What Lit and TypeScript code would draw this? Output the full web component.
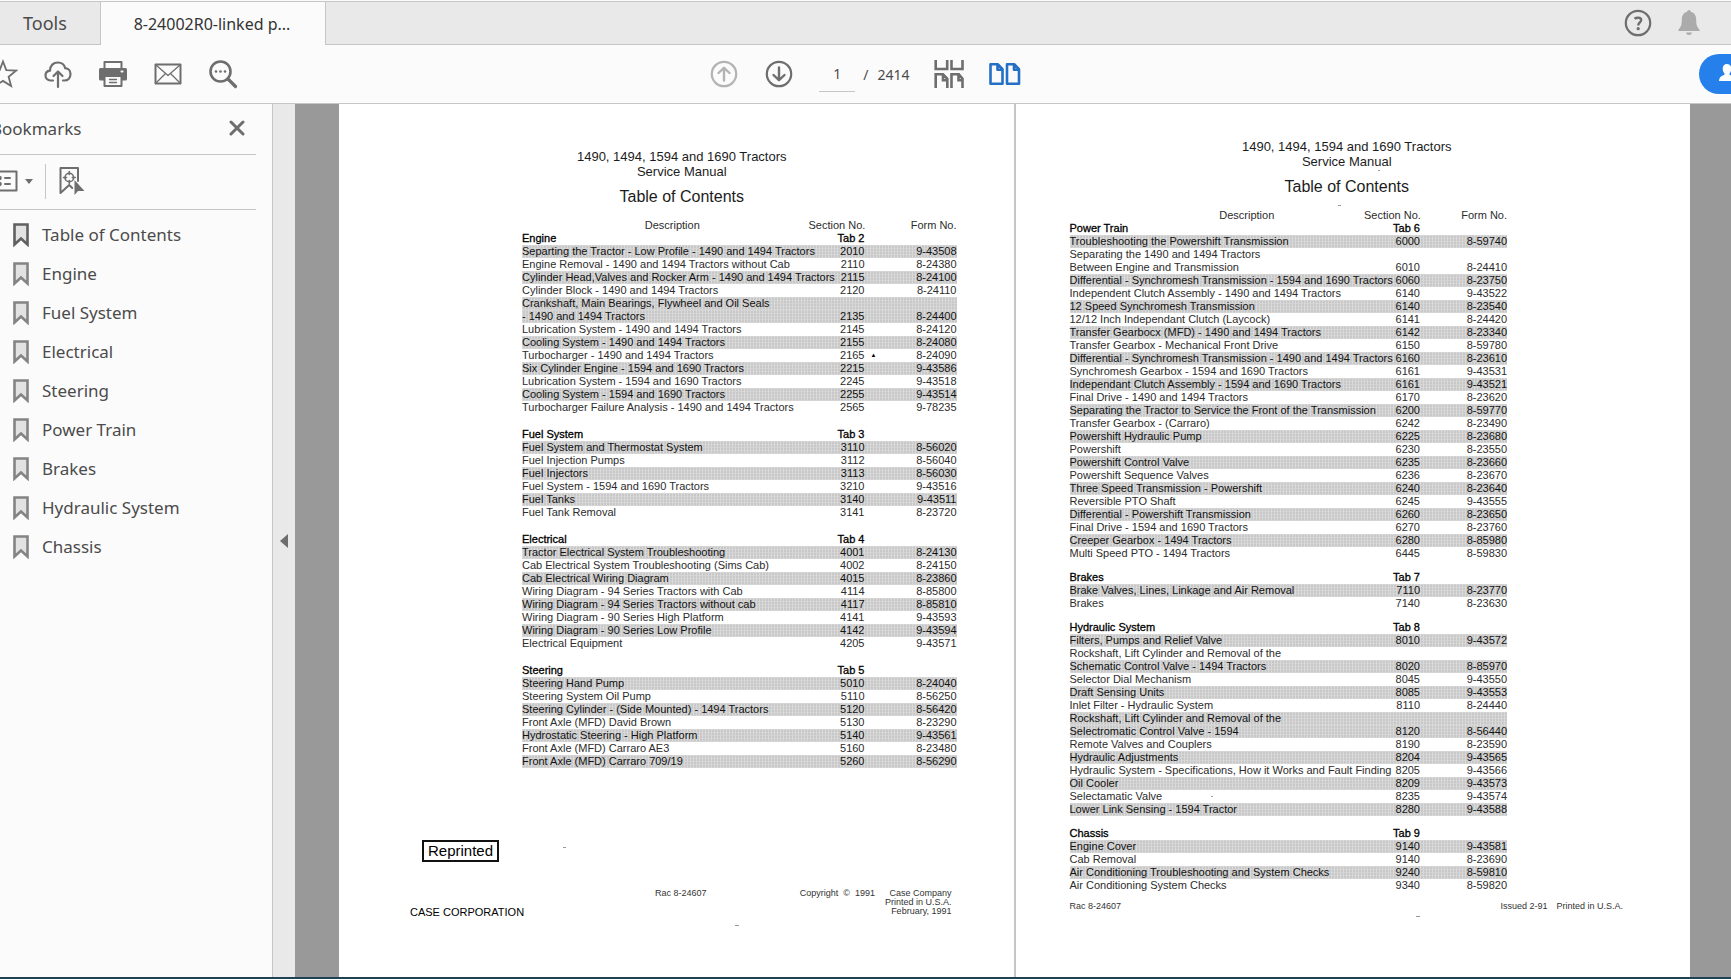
import { LitElement, html, css, svg, nothing } from "lit";
import { customElement, property } from "lit/decorators.js";

type Row = { text: string; section?: string; form?: string; band?: boolean; mark?: boolean };
type Group = { title: string; tab: string; rows: Row[] };
type Speck = { x: number; y: number; w: number };

/** Each entry is "description|section|form"; a leading * marks a shaded row. */
const rows = (source: string): Row[] =>
  source
    .trim()
    .split("\n")
    .map((line) => {
      const raw = line.trim();
      const band = raw.startsWith("*");
      const [text, section, form] = (band ? raw.slice(1) : raw).split("|");
      return { text, section, form, band, mark: section === "2165" };
    });

const LEFT: Group[] = [
  {
    title: "Engine",
    tab: "Tab 2",
    rows: rows(`
      *Separting the Tractor - Low Profile - 1490 and 1494 Tractors|2010|9-43508
      Engine Removal - 1490 and 1494 Tractors without Cab|2110|8-24380
      *Cylinder Head,Valves and Rocker Arm - 1490 and 1494 Tractors|2115|8-24100
      Cylinder Block - 1490 and 1494 Tractors|2120|8-24110
      *Crankshaft, Main Bearings, Flywheel and Oil Seals
      *- 1490 and 1494 Tractors|2135|8-24400
      Lubrication System - 1490 and 1494 Tractors|2145|8-24120
      *Cooling System - 1490 and 1494 Tractors|2155|8-24080
      Turbocharger - 1490 and 1494 Tractors|2165|8-24090
      *Six Cylinder Engine - 1594 and 1690 Tractors|2215|9-43586
      Lubrication System - 1594 and 1690 Tractors|2245|9-43518
      *Cooling System - 1594 and 1690 Tractors|2255|9-43514
      Turbocharger Failure Analysis - 1490 and 1494 Tractors|2565|9-78235`),
  },
  {
    title: "Fuel System",
    tab: "Tab 3",
    rows: rows(`
      *Fuel System and Thermostat System|3110|8-56020
      Fuel Injection Pumps|3112|8-56040
      *Fuel Injectors|3113|8-56030
      Fuel System - 1594 and 1690 Tractors|3210|9-43516
      *Fuel Tanks|3140|9-43511
      Fuel Tank Removal|3141|8-23720`),
  },
  {
    title: "Electrical",
    tab: "Tab 4",
    rows: rows(`
      *Tractor Electrical System Troubleshooting|4001|8-24130
      Cab Electrical System Troubleshooting (Sims Cab)|4002|8-24150
      *Cab Electrical Wiring Diagram|4015|8-23860
      Wiring Diagram - 94 Series Tractors with Cab|4114|8-85800
      *Wiring Diagram - 94 Series Tractors without cab|4117|8-85810
      Wiring Diagram - 90 Series High Platform|4141|9-43593
      *Wiring Diagram - 90 Series Low Profile|4142|9-43594
      Electrical Equipment|4205|9-43571`),
  },
  {
    title: "Steering",
    tab: "Tab 5",
    rows: rows(`
      *Steering Hand Pump|5010|8-24040
      Steering System Oil Pump|5110|8-56250
      *Steering Cylinder - (Side Mounted) - 1494 Tractors|5120|8-56420
      Front Axle (MFD) David Brown|5130|8-23290
      *Hydrostatic Steering - High Platform|5140|9-43561
      Front Axle (MFD) Carraro AE3|5160|8-23480
      *Front Axle (MFD) Carraro 709/19|5260|8-56290`),
  },
];

const RIGHT: Group[] = [
  {
    title: "Power Train",
    tab: "Tab 6",
    rows: rows(`
      *Troubleshooting the Powershift Transmission|6000|8-59740
      Separating the 1490 and 1494 Tractors
      Between Engine and Transmission|6010|8-24410
      *Differential - Synchromesh Transmission - 1594 and 1690 Tractors|6060|8-23750
      Independent Clutch Assembly - 1490 and 1494 Tractors|6140|9-43522
      *12 Speed Synchromesh Transmission|6140|8-23540
      12/12 Inch Independant Clutch (Laycock)|6141|8-24420
      *Transfer Gearbocx (MFD) - 1490 and 1494 Tractors|6142|8-23340
      Transfer Gearbox - Mechanical Front Drive|6150|8-59780
      *Differential - Synchromesh Transmission - 1490 and 1494 Tractors|6160|8-23610
      Synchromesh Gearbox - 1594 and 1690 Tractors|6161|9-43531
      *Independant Clutch Assembly - 1594 and 1690 Tractors|6161|9-43521
      Final Drive - 1490 and 1494 Tractors|6170|8-23620
      *Separating the Tractor to Service the Front of the Transmission|6200|8-59770
      Transfer Gearbox - (Carraro)|6242|8-23490
      *Powershift Hydraulic Pump|6225|8-23680
      Powershift|6230|8-23550
      *Powershift Control Valve|6235|8-23660
      Powershift Sequence Valves|6236|8-23670
      *Three Speed Transmission - Powershift|6240|8-23640
      Reversible PTO Shaft|6245|9-43555
      *Differential - Powershift Transmission|6260|8-23650
      Final Drive - 1594 and 1690 Tractors|6270|8-23760
      *Creeper Gearbox - 1494 Tractors|6280|8-85980
      Multi Speed PTO - 1494 Tractors|6445|8-59830`),
  },
  {
    title: "Brakes",
    tab: "Tab 7",
    rows: rows(`
      *Brake Valves, Lines, Linkage and Air Removal|7110|8-23770
      Brakes|7140|8-23630`),
  },
  {
    title: "Hydraulic System",
    tab: "Tab 8",
    rows: rows(`
      *Filters, Pumps and Relief Valve|8010|9-43572
      Rockshaft, Lift Cylinder and Removal of the
      *Schematic Control Valve - 1494 Tractors|8020|8-85970
      Selector Dial Mechanism|8045|9-43550
      *Draft Sensing Units|8085|9-43553
      Inlet Filter - Hydraulic System|8110|8-24440
      *Rockshaft, Lift Cylinder and Removal of the
      *Selectromatic Control Valve - 1594|8120|8-56440
      Remote Valves and Couplers|8190|8-23590
      *Hydraulic Adjustments|8204|9-43565
      Hydraulic System - Specifications, How it Works and Fault Finding|8205|9-43566
      *Oil Cooler|8209|9-43573
      Selectamatic Valve|8235|9-43574
      *Lower Link Sensing - 1594 Tractor|8280|9-43588`),
  },
  {
    title: "Chassis",
    tab: "Tab 9",
    rows: rows(`
      *Engine Cover|9140|9-43581
      Cab Removal|9140|8-23690
      *Air Conditioning Troubleshooting and System Checks|9240|8-59810
      Air Conditioning System Checks|9340|8-59820`),
  },
];

const icon = (w: number, h: number, body: unknown) =>
  html`<svg width=${w} height=${h} viewBox="0 0 ${w} ${h}" fill="none" stroke="currentColor" stroke-width="2" stroke-linecap="round" stroke-linejoin="round" aria-hidden="true">${body}</svg>`;

const icons = {
  star: icon(30, 30, svg`<path stroke-width="1.8" stroke-linejoin="miter" d="M15 2.5l3.3 8.6 10 .4-7.700 6.300 2.500 9.200-8.100-5.100-8.100 5.100 2.500-9.200-7.700-6.300 10-.4z"/>`),
  cloud: icon(30, 30, svg`<path stroke-width="2.2" d="M10 21.500H7.500C4.500 21.500 2.500 19.300 2.500 16.600c0-2.600 1.900-4.600 4.500-4.900C7 6.500 10.500 3.500 14.800 3.500c3.700 0 6.700 2.300 7.400 5.700 3.200.2 5.300 2.700 5.300 5.900 0 3.600-2.500 6.400-6 6.400H20"/><path stroke-width="2.200" d="M15 28V13M10.500 17l4.500-4.500 4.500 4.500"/>`),
  printer: icon(28, 28, svg`<path d="M5.500 9V2h17v7"/><path d="M1.500 9.500h25v9.500h-25z" fill="currentColor" stroke-width="3"/><path d="M5.500 16h17v10h-17z" fill="#fbfbfb"/><path d="M10.500 19.500h7M10.500 22.500h7" stroke-width="1.300"/><path d="M22.500 11.500h1" stroke="#fbfbfb"/>`),
  mail: icon(28, 22, svg`<path d="M1.500 1.500h25v19h-25z"/><path stroke-width="1.300" d="M2 2l12 10.500L26 2M2 20l9.500-9.500M26 20l-9.500-9.500"/>`),
  search: icon(30, 30, svg`<circle cx="12.500" cy="12.500" r="10" stroke-width="2.600"/><path d="M20 20l7.500 7.500" stroke-width="3.200"/><g fill="currentColor" stroke="none"><circle cx="8" cy="12.500" r="1.300"/><circle cx="12.500" cy="12.500" r="1.300"/><circle cx="17" cy="12.500" r="1.300"/></g>`),
  up: icon(28, 28, svg`<circle cx="14" cy="14" r="12.200" stroke-width="2.200"/><path stroke-width="2.400" d="M14 20.500V8.500M8.500 13L14 7.800 19.500 13"/>`),
  down: icon(28, 28, svg`<circle cx="14" cy="14" r="12.200" stroke-width="2.200"/><path stroke-width="2.400" d="M14 7.500v12M8.500 15l5.500 5.200L19.500 15"/>`),
  grid: icon(30, 28, svg`<g stroke-width="2.600" stroke-linecap="butt" stroke-linejoin="miter"><path d="M1.700 0v9h11.500V0M17.500 0v9h11V0"/><path d="M1.700 28V14.200h7.300l4.300 4.600V28M9 14.200v6h4.300M17.500 28V14.200h7.300l3.700 4.600V28M24.500 14.200v6h4"/></g>`),
  pages: icon(32, 24, svg`<path stroke-width="2.600" d="M1.500 2.200h7.200l4.800 5v14.500h-12zM8.500 2.500v5.200h5M18 2.200h7.200l4.800 5v14.500H18zM25 2.500v5.200h5"/>`),
  help: icon(28, 28, svg`<circle cx="14" cy="14" r="12.200" stroke-width="2.200"/><path stroke-width="2.400" stroke-linecap="butt" d="M10.500 9.700C11.800 8.700 17.200 7.800 17.200 11c0 2.300-3 2.500-3 5.500"/><circle cx="14.200" cy="19.700" r="1.600" fill="currentColor" stroke="none"/>`),
  bell: icon(22, 26, svg`<g fill="currentColor" stroke="none"><path d="M11 0c1 0 1.800.7 1.800 1.800 3.500.9 5.400 4 5.400 7.700 0 6.500 1.300 7.700 3.300 10v1.500H.5v-1.500c2-2.300 3.300-3.500 3.300-10 0-3.700 1.900-6.800 5.400-7.700C9.200.7 10 0 11 0z"/><path d="M8 22.500h6c-.5 1.800-1.500 2.500-3 2.500s-2.500-.7-3-2.500z"/></g>`),
  share: icon(30, 20, svg`<g fill="currentColor" stroke="none"><path d="M8 0c2.700 0 4.300 2 4.300 4.800 0 2-.8 3.600-1.800 4.600v1.400c2 .7 3.500 1.600 4.300 3V17H0c0-3.500 2-5.200 5.500-6.200V9.400C4.500 8.400 3.700 6.800 3.700 4.800 3.700 2 5.300 0 8 0z"/><circle cx="18" cy="14" r="6"/></g>`),
  close: icon(16, 16, svg`<path stroke-width="3" d="M2 2l12 12M14 2L2 14"/>`),
  options: icon(30, 22, svg`<path d="M1.500 1.500h27v19h-27z"/><path stroke-width="2" d="M17 8h5M17 14h5"/><g fill="currentColor" stroke="none"><circle cx="11.500" cy="8" r="2.300"/><circle cx="11.500" cy="14" r="2.300"/></g>`),
  caret: icon(8, 5, svg`<path d="M0 0h8L4 5z" fill="currentColor" stroke="none"/>`),
  find: icon(26, 30, svg`<path d="M1.500 2h17.500v13M1.500 2v25l8.700-8 3 3"/><circle cx="10.300" cy="11.500" r="4.300" stroke-width="1.600"/><path stroke-width="1.600" d="M10.300 5.500v3M10.300 14.500v3M4.500 11.500h3M13.300 11.500h3"/><path d="M15.500 14v15l3.500-4h6.500z" fill="currentColor" stroke="none"/>`),
  bookmark: icon(16, 24, svg`<path stroke-width="2.600" stroke-linejoin="miter" fill="#e2e2e2" d="M1.500 1.500h13v20l-6.500-6-6.500 6z"/>`),
  collapse: icon(8, 14, svg`<path d="M8 0v14L0 7z" fill="currentColor" stroke="none"/>`),
};

@customElement("contents-table")
export class ContentsTable extends LitElement {
  @property({ attribute: false }) groups: Group[] = [];

  static styles = css`
    :host {
      display: block;
      font-family: "Liberation Sans", Arial, sans-serif;
      font-size: 11px;
      line-height: 13px;
      color: #2c2c2c;
    }
    .table {
      width: 100%;
      table-layout: fixed;
      border-collapse: collapse;
    }
    .lead { width: 26px; }
    .section { width: 30px; }
    .form { width: var(--form-width, 92px); }
    th, td {
      padding: 0;
      height: 13px;
      font-weight: 400;
      text-align: left;
      white-space: nowrap;
    }
    .description {
      text-align: center;
      padding-left: var(--description-shift, 0);
    }
    .number { text-align: right; }
    .title { color: #000; -webkit-text-stroke: 0.3px #000; }
    .band {
      color: #111;
      background-color: #c8c8c8;
      background-image:
        repeating-linear-gradient(90deg, #d9d9d9 0 1px, transparent 1px 3px),
        repeating-linear-gradient(0deg, #d3d3d3 0 1px, transparent 1px 3px);
    }
    .group + .group::before {
      content: "";
      display: table-row;
      height: var(--group-gap, 14px);
    }
    .marked { position: relative; }
    .mark {
      position: absolute;
      left: 100%;
      margin-left: 6px;
      font-size: 6px;
      color: #000;
    }
  `;

  render() {
    return html`
      <table class="table">
        <colgroup><col /><col class="lead" /><col class="section" /><col class="form" /></colgroup>
        <thead>
          <tr>
            <th class="description" scope="col">Description</th>
            <th class="number" scope="col" colspan="2">Section No.</th>
            <th class="number" scope="col">Form No.</th>
          </tr>
        </thead>
        ${this.groups.map(
          (group) => html`
            <tbody class="group">
              <tr class="title">
                <th scope="rowgroup">${group.title}</th>
                <th class="number" colspan="2">${group.tab}</th>
                <td></td>
              </tr>
              ${group.rows.map(
                (row) => html`
                  <tr class=${row.band ? "band" : "plain"}>
                    <td colspan="2">${row.text}</td>
                    <td class="number marked">${row.section}${row.mark ? html`<span class="mark">▲</span>` : nothing}</td>
                    <td class="number">${row.form}</td>
                  </tr>
                `,
              )}
            </tbody>
          `,
        )}
      </table>
    `;
  }
}

@customElement("manual-page")
export class ManualPage extends LitElement {
  @property({ attribute: false }) groups: Group[] = [];
  @property({ attribute: false }) specks: Speck[] = [];

  static styles = css`
    :host {
      display: block;
      position: relative;
      flex: 1;
      min-width: 0;
      background: #fff;
      color: #1c1c1c;
      font-family: "Liberation Sans", Arial, sans-serif;
    }
    .heading { text-align: center; padding: var(--heading-padding); }
    .model { margin: 0; font-size: 13px; line-height: 15px; font-weight: 400; }
    .contents { margin: 8px 0 12px; font-size: 16px; line-height: 20px; font-weight: 400; }
    .table { padding: var(--table-padding); }
    .speck { position: absolute; height: 1px; background: #999; }
  `;

  render() {
    return html`
      <header class="heading">
        <p class="model">1490, 1494, 1594 and 1690 Tractors</p>
        <p class="model">Service Manual</p>
        <h2 class="contents">Table of Contents</h2>
      </header>
      <div class="table"><contents-table .groups=${this.groups}></contents-table></div>
      <slot></slot>
      ${this.specks.map((s) => html`<i class="speck" style="left:${s.x}px;top:${s.y}px;width:${s.w}px"></i>`)}
    `;
  }
}

@customElement("app-root")
export class AppRoot extends LitElement {
  static styles = css`
    :host {
      display: flex;
      flex-direction: column;
      box-sizing: border-box;
      height: 100vh;
      overflow: hidden;
      border-bottom: 2px solid #1f4156;
      background: #fbfbfb;
      color: #4b4b4b;
      font-family: "Noto Sans", "Open Sans", sans-serif;
    }
    button {
      display: inline-flex;
      align-items: center;
      justify-content: center;
      padding: 0;
      border: 0;
      background: none;
      color: #6e6e6e;
      font: inherit;
    }
    a { color: inherit; text-decoration: none; }
    svg { display: block; flex: none; }

    .tabs {
      display: flex;
      height: 43px;
      margin-top: 1px;
      border-top: 1px solid #c6c6c6;
      background: #e9e9e9;
    }
    .tab {
      box-sizing: border-box;
      border-bottom: 1px solid #c6c6c6;
      font-size: 16px;
      color: #333;
    }
    .tools { width: 100px; padding-right: 10px; font-size: 18px; color: #4b4b4b; }
    .current {
      width: 226px;
      padding-right: 2px;
      border-left: 1px solid #c6c6c6;
      border-right: 1px solid #c6c6c6;
      border-bottom: 0;
      background: #fbfbfb;
    }
    .tray {
      display: flex;
      flex: 1;
      align-items: center;
      justify-content: flex-end;
      gap: 26px;
      padding-right: 31px;
      border-bottom: 1px solid #c6c6c6;
    }
    .bell { color: #ababab; }

    .toolbar {
      display: grid;
      grid-template-columns: 1fr auto 1fr;
      align-items: center;
      height: 58px;
      border-bottom: 1px solid #c6c6c6;
    }
    .files { display: flex; align-items: center; gap: 26px; margin-left: -12px; }
    .files button { width: 29px; }
    .pager { display: flex; align-items: center; font-size: 15px; }
    .up { color: #b3b3b3; margin-right: 27px; }
    .number {
      box-sizing: border-box;
      width: 36px;
      height: 36px;
      margin-left: 26px;
      padding: 0;
      border: 0;
      border-bottom: 1px solid #c6c6c6;
      background: none;
      color: #4b4b4b;
      font: inherit;
      font-size: 14px;
      text-align: center;
    }
    .total { display: flex; gap: 9px; margin: 0 24px 0 8px; font-size: 14px; }
    .layout { margin-right: 25px; }
    .pages { color: #2470c4; }
    .share {
      justify-self: end;
      box-sizing: border-box;
      width: 88px;
      height: 40px;
      margin-right: -56px;
      padding-left: 20px;
      justify-content: flex-start;
      border-radius: 20px;
      background: #2680eb;
      color: #fff;
    }

    .body { display: flex; flex: 1; min-height: 0; }
    .sidebar { width: 272px; flex: none; border-right: 1px solid #c6c6c6; }
    .panel-head, .panel-tools {
      box-sizing: border-box;
      display: flex;
      align-items: center;
      margin-right: 16px;
      padding-bottom: 2px;
      border-bottom: 1px solid #c6c6c6;
    }
    .panel-head { height: 51px; }
    .panel-title { margin: 0 auto 0 -9px; font-size: 17px; font-weight: 400; }
    .close { margin-right: 11px; }
    .panel-tools { height: 55px; }
    .options { margin-left: -12px; gap: 7px; }
    .find {
      height: 35px;
      margin-left: 12px;
      padding-left: 13px;
      border-left: 1px solid #c6c6c6;
    }
    .list { margin: 0; padding: 5px 0 0; list-style: none; }
    .entry {
      display: flex;
      align-items: center;
      gap: 13px;
      height: 39px;
      padding-left: 13px;
      font-size: 17px;
    }
    .entry svg { color: #848484; }
    .entry.active svg { color: #606060; }
    .gutter {
      flex: none;
      width: 22px;
      background: #e9e9e9;
    }
    .collapse { width: 100%; height: 100%; }

    .viewer {
      display: flex;
      flex: 1;
      gap: 2px;
      min-width: 0;
      padding: 0 41px 0 44px;
      overflow: hidden;
      background: linear-gradient(#c6c6c6, #c6c6c6) center / 50% 100% no-repeat #999;
    }
    .left {
      --heading-padding: 45px 0 0 11px;
      --table-padding: 0 57px 0 183px;
      --description-shift: 14px;
      --group-gap: 14px;
    }
    .right {
      --heading-padding: 35px 12px 0 0;
      --table-padding: 0 183px 0 54px;
      --description-shift: 60px;
      --form-width: 87px;
      --group-gap: 11px;
    }
    .reprinted {
      display: inline-block;
      margin: 72px 0 0 83px;
      padding: 0 4px;
      border: 2px solid #111;
      font-size: 15px;
      line-height: 18px;
      color: #000;
    }
    .imprint {
      display: flex;
      font-size: 9px;
      line-height: 9px;
      color: #333;
    }
    .imprint p { margin: 0; }
    .left .imprint { padding: 27px 62px 0 71px; }
    .right .imprint { justify-content: space-between; padding: 10px 67px 0 54px; }
    .imprint .corporation {
      flex: 0 0 245px;
      padding-top: 17px;
      font-size: 11px;
      line-height: 13px;
      color: #000;
    }
    .form-code { flex: 1; }
    .imprint .company { margin-left: 10px; text-align: right; }
    .imprint .issued { display: flex; gap: 9px; }
  `;

  private bookmarks = [
    "Table of Contents", "Engine", "Fuel System", "Electrical", "Steering",
    "Power Train", "Brakes", "Hydraulic System", "Chassis",
  ];

  render() {
    return html`
      <nav class="tabs" aria-label="Tabs">
        <button class="tab tools">Tools</button>
        <button class="tab current">8-24002R0-linked p...</button>
        <div class="tray">
          <button aria-label="Help">${icons.help}</button>
          <button class="bell" aria-label="Notifications">${icons.bell}</button>
        </div>
      </nav>

      <div class="toolbar">
        <div class="files">
          <button aria-label="Star">${icons.star}</button>
          <button aria-label="Upload">${icons.cloud}</button>
          <button aria-label="Print">${icons.printer}</button>
          <button aria-label="Mail">${icons.mail}</button>
          <button aria-label="Find">${icons.search}</button>
        </div>
        <div class="pager">
          <button class="up" aria-label="Previous page">${icons.up}</button>
          <button aria-label="Next page">${icons.down}</button>
          <input class="number" aria-label="Page number" value="1" />
          <span class="total"><span>/</span><span>2414</span></span>
          <button class="layout" aria-label="Scrolling pages">${icons.grid}</button>
          <button class="pages" aria-label="Two-page view">${icons.pages}</button>
        </div>
        <button class="share" aria-label="Share">${icons.share}</button>
      </div>

      <div class="body">
        <aside class="sidebar">
          <div class="panel-head">
            <h1 class="panel-title">Bookmarks</h1>
            <button class="close" aria-label="Close">${icons.close}</button>
          </div>
          <div class="panel-tools">
            <button class="options" aria-label="Options">${icons.options}${icons.caret}</button>
            <button class="find" aria-label="Find current bookmark">${icons.find}</button>
          </div>
          <ul class="list">
            ${this.bookmarks.map(
              (name, i) => html`<li><a class="entry ${i === 0 ? "active" : ""}" href="#">${icons.bookmark}<span>${name}</span></a></li>`,
            )}
          </ul>
        </aside>
        <div class="gutter"><button class="collapse" aria-label="Collapse panel">${icons.collapse}</button></div>

        <main class="viewer">
          <manual-page
            class="left"
            .groups=${LEFT}
            .specks=${[{ x: 396, y: 821, w: 4 }, { x: 224, y: 743, w: 3 }]}
          >
            <div class="reprinted">Reprinted</div>
            <footer class="imprint">
              <p class="corporation">CASE CORPORATION</p>
              <p class="form-code">Rac 8-24607</p>
              <p>Copyright &nbsp;© &nbsp;1991</p>
              <p class="company">Case Company<br />Printed in U.S.A.<br />February, 1991</p>
            </footer>
          </manual-page>
          <manual-page
            class="right"
            .groups=${RIGHT}
            .specks=${[{ x: 400, y: 812, w: 4 }, { x: 362, y: 66, w: 2 }, { x: 322, y: 101, w: 3 }, { x: 195, y: 692, w: 2 }]}
          >
            <footer class="imprint">
              <p>Rac 8-24607</p>
              <p class="issued"><span>Issued 2-91</span><span>Printed in U.S.A.</span></p>
            </footer>
          </manual-page>
        </main>
      </div>
    `;
  }
}
